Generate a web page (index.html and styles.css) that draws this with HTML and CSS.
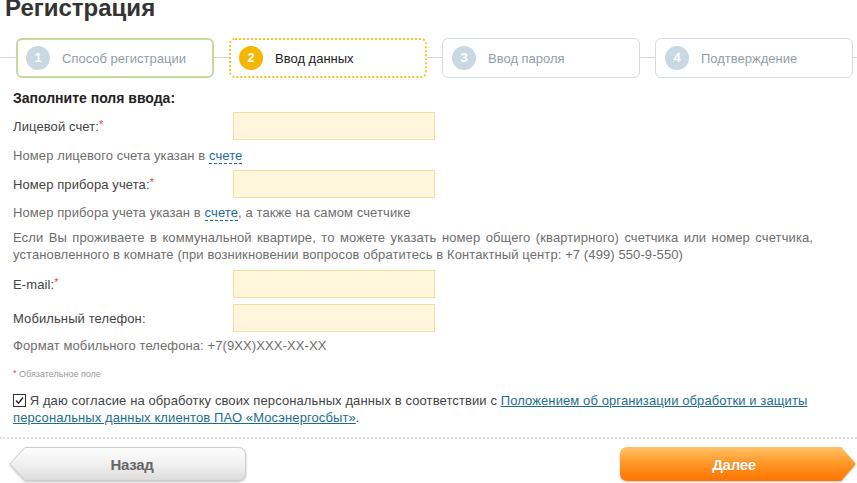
FILE: index.html
```html
<!DOCTYPE html>
<html lang="ru">
<head>
<meta charset="utf-8">
<title>Регистрация</title>
<link rel="stylesheet" href="styles.css">
</head>
<body>
<h1 class="title">Регистрация</h1>
<ol class="steps">
  <li class="step step-done"><span class="step-num">1</span><span class="step-label">Способ регистрации</span></li>
  <li class="step step-active"><span class="step-num">2</span><span class="step-label">Ввод данных</span></li>
  <li class="step"><span class="step-num">3</span><span class="step-label">Ввод пароля</span></li>
  <li class="step"><span class="step-num">4</span><span class="step-label">Подтверждение</span></li>
</ol>
<form class="form">
  <div class="form-heading">Заполните поля ввода:</div>
  <div class="row row-first"><label class="label">Лицевой счет:<span class="req">*</span></label><input class="input" type="text"></div>
  <p class="hint hint-1">Номер лицевого счета указан в <a class="dash-link">счете</a></p>
  <div class="row row-2"><label class="label">Номер прибора учета:<span class="req">*</span></label><input class="input" type="text"></div>
  <p class="hint hint-2">Номер прибора учета указан в <a class="dash-link">счете</a>, а также на самом счетчике</p>
  <p class="hint para">Если Вы проживаете в коммунальной квартире, то можете указать номер общего (квартирного) счетчика или номер счетчика, установленного в комнате (при возникновении вопросов обратитесь в Контактный центр: +7 (499) 550-9-550)</p>
  <div class="row row-3"><label class="label">E-mail:<span class="req">*</span></label><input class="input" type="text"></div>
  <div class="row row-4"><label class="label">Мобильный телефон:</label><input class="input" type="text"></div>
  <p class="hint hint-3">Формат мобильного телефона: +7(9XX)XXX-XX-XX</p>
  <p class="note"><span class="req">*</span> Обязательное поле</p>
  <p class="consent"><span class="checkbox"><svg width="13" height="13" viewBox="0 0 13 13"><rect x="0.5" y="0.5" width="12" height="12" fill="#fff" stroke="#333"/><path d="M3 6.5 L5.5 9.2 L10 3.5" fill="none" stroke="#222" stroke-width="1.4"/></svg></span> Я даю согласие на обработку своих персональных данных в соответствии с <a class="link">Положением об организации обработки и защиты персональных данных клиентов ПАО «Мосэнергосбыт»</a>.</p>
</form>
<div class="divider"></div>
<div class="actions">
  <button class="btn btn-back" type="button">
    <svg class="btn-shape" width="238" height="37" viewBox="0 0 238 37">
      <defs><linearGradient id="gBack" x1="0" y1="0" x2="0" y2="1"><stop offset="0" stop-color="#fdfdfd"/><stop offset="0.55" stop-color="#efefef"/><stop offset="1" stop-color="#dcdcdc"/></linearGradient></defs>
      <path d="M16 1.5 H229 Q236.5 1.5 236.5 9 V27 Q236.5 34.5 229 34.5 H16 L2 19 Q1 18 2 17 Z" fill="url(#gBack)" stroke="#cfcfcf"/>
    </svg>
    <span class="btn-text">Назад</span>
  </button>
  <button class="btn btn-next" type="button">
    <svg class="btn-shape" width="238" height="37" viewBox="0 0 238 37">
      <defs><linearGradient id="gNext" x1="0" y1="0" x2="0" y2="1"><stop offset="0" stop-color="#ffc168"/><stop offset="0.45" stop-color="#ff9a2a"/><stop offset="1" stop-color="#ff7300"/></linearGradient></defs>
      <path d="M9 1 H222 L236 17 Q237 18 236 19 L222 35 H9 Q1 35 1 27 V9 Q1 1 9 1 Z" fill="url(#gNext)"/>
    </svg>
    <span class="btn-text">Далее</span>
  </button>
</div>
</body>
</html>
```

FILE: styles.css
```css
html, body {
  margin: 0;
  padding: 0;
  background: #fff;
}
body {
  font-family: "Liberation Sans", Arial, sans-serif;
  font-size: 13px;
  letter-spacing: 0.1px;
  color: #444;
  width: 857px;
  height: 483px;
  overflow: hidden;
}
.title {
  margin: -4px 0 0 5px;
  font-size: 24px;
  line-height: 24px;
  font-weight: bold;
  letter-spacing: 0;
  color: #333;
}
.steps {
  list-style: none;
  margin: 18px 0 0 0;
  padding: 0 0 0 16px;
  display: flex;
  gap: 15px;
  height: 40px;
  background: linear-gradient(#d4d4d4, #d4d4d4) no-repeat 0 19px / 100% 1px;
}
.step {
  box-sizing: border-box;
  width: 198px;
  height: 40px;
  display: flex;
  align-items: center;
  padding-left: 9px;
  border: 1px solid #d3dce2;
  border-radius: 6px;
  background: #fff;
  color: #8f9ea8;
  letter-spacing: 0;
}
.step-done {
  border: 2px solid #c6da9c;
  padding-left: 8px;
}
.step-active {
  border: 2px dotted #f2c924;
  padding-left: 8px;
  color: #222;
}
.step-num {
  width: 24px;
  height: 24px;
  border-radius: 50%;
  background: #c9d9e3;
  color: #fff;
  font-weight: bold;
  font-size: 13px;
  line-height: 24px;
  text-align: center;
  margin-right: 12px;
  flex: none;
}
.step-active .step-num {
  background: #f6b500;
}
.step-label {
  font-size: 13px;
}
.form {
  padding-left: 13px;
  margin: 0;
}
.form-heading {
  margin-top: 11px;
  font-size: 14px;
  line-height: 18px;
  font-weight: bold;
  letter-spacing: 0;
  color: #222;
}
.row {
  display: flex;
  align-items: center;
  height: 28px;
}
.row-first { margin-top: 5px; }
.row-2 { margin-top: 5px; }
.row-3 { margin-top: 7px; }
.row-4 { margin-top: 6px; }
.label {
  width: 220px;
  color: #444;
}
.req {
  color: #e04848;
  font-size: 11px;
  vertical-align: 3px;
}
.input {
  box-sizing: border-box;
  width: 202px;
  height: 28px;
  margin: 0;
  border: 1px solid #f1e0a2;
  background: #fff6dc;
  outline: none;
}
.hint {
  margin: 0;
  line-height: 18px;
  color: #6e6e6e;
}
.hint-1 { margin-top: 7px; }
.hint-2 { margin-top: 6px; }
.hint-3 { margin-top: 5px; }
.para {
  margin-top: 7px;
  line-height: 17px;
  width: 800px;
  text-align: justify;
}
.dash-link {
  color: #1b6b96;
  text-decoration: none;
  border-bottom: 1px dashed #1b6b96;
}
.note {
  margin: 12px 0 0 0;
  font-size: 9px;
  line-height: 12px;
  letter-spacing: 0;
  color: #999;
}
.note .req {
  font-size: 9px;
  vertical-align: 1px;
}
.consent {
  margin: 12px 0 0 0;
  line-height: 17px;
  color: #444;
  width: 800px;
}
.checkbox {
  display: inline-block;
  vertical-align: -2px;
  line-height: 0;
}
.link {
  color: #1d6e8c;
  text-decoration: underline;
}
.divider {
  margin-top: 11px;
  border-top: 2px dotted #dcdcdc;
}
.actions {
  margin-top: 7px;
  display: flex;
  justify-content: space-between;
  padding-left: 9px;
}
.btn {
  display: grid;
  padding: 0;
  margin: 0;
  border: 0;
  background: none;
  width: 238px;
  height: 37px;
  font-family: "Liberation Sans", Arial, sans-serif;
  cursor: pointer;
}
.btn-shape,
.btn-text {
  grid-area: 1 / 1;
}
.btn-shape {
  filter: drop-shadow(0 1px 1px rgba(0, 0, 0, 0.25));
}
.btn-text {
  position: relative;
  align-self: center;
  justify-self: center;
  font-weight: bold;
  font-size: 15px;
  letter-spacing: -0.3px;
}
.btn-back .btn-text {
  color: #666;
  margin-left: 8px;
}
.btn-next .btn-text {
  color: #fff;
  text-shadow: 0 0 1px rgba(160, 70, 0, 0.5);
  margin-right: 8px;
}
```
